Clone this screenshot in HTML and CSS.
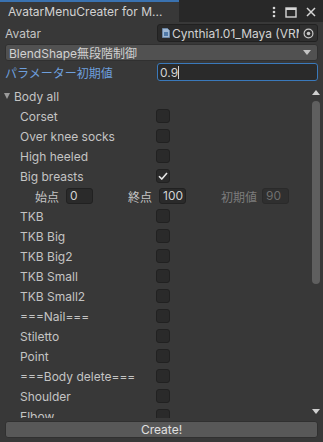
FILE: index.html
```html
<!doctype html>
<html>
<head>
<meta charset="utf-8">
<title>AvatarMenuCreater</title>
<link rel="stylesheet" href="styles.css">
</head>
<body>
<div class="window">
  <div class="tabbar">
    <div class="tab">AvatarMenuCreater for M...</div>
    <div class="tab-icons">
      <svg width="4" height="12" viewBox="0 0 4 12"><circle cx="2" cy="2" r="1.3" fill="#d6d6d6"/><circle cx="2" cy="6" r="1.3" fill="#d6d6d6"/><circle cx="2" cy="10" r="1.3" fill="#d6d6d6"/></svg>
      <svg width="12" height="11" viewBox="0 0 12 11"><rect x="1" y="1" width="10" height="9" fill="none" stroke="#d6d6d6" stroke-width="1.4"/><rect x="1" y="1" width="10" height="2" fill="#d6d6d6"/></svg>
      <svg width="10" height="10" viewBox="0 0 10 10"><path d="M1 1 L9 9 M9 1 L1 9" stroke="#d6d6d6" stroke-width="1.5"/></svg>
    </div>
  </div>

  <div class="row top-row">
    <div class="label">Avatar</div>
    <div class="object-field">
      <svg class="obj-icon" width="8" height="10" viewBox="0 0 8 10"><path d="M0.5 0.5 H5.5 L7.5 2.5 V9.5 H0.5 Z" fill="#9fb8d4" stroke="#6b86a6"/><rect x="2" y="4" width="4" height="4" fill="#4f79a8"/></svg>
      <span class="obj-text">Cynthia1.01_Maya (VRM)</span>
      <span class="obj-pick">
        <svg width="11" height="11" viewBox="0 0 11 11"><circle cx="5.5" cy="5.5" r="4.4" fill="none" stroke="#c8c8c8" stroke-width="1.2"/><circle cx="5.5" cy="5.5" r="1.8" fill="#c8c8c8"/></svg>
      </span>
    </div>
  </div>

  <div class="dropdown">
    <span>BlendShape無段階制御</span>
    <svg width="8" height="5" viewBox="0 0 8 5"><path d="M0 0 H8 L4 5 Z" fill="#c4c4c4"/></svg>
  </div>

  <div class="row top-row param-row">
    <div class="label focus">パラメーター初期値</div>
    <div class="text-field focused">0.9<span class="caret"></span></div>
  </div>

  <div class="scroll">
    <div class="list">
      <div class="foldout"><span class="fold-arrow"></span>Body all</div>
      <div class="item"><span class="label">Corset</span><span class="check"></span></div>
      <div class="item"><span class="label">Over knee socks</span><span class="check"></span></div>
      <div class="item"><span class="label">High heeled</span><span class="check"></span></div>
      <div class="item"><span class="label">Big breasts</span><span class="check on"><svg width="10" height="8" viewBox="0 0 10 8"><path d="M1 4.2 L3.8 7 L9 1" fill="none" stroke="#e6e6e6" stroke-width="1.6"/></svg></span></div>
      <div class="range">
        <span class="range-label">始点</span><span class="small-field">0</span>
        <span class="range-label">終点</span><span class="small-field">100</span>
        <span class="range-label dim">初期値</span><span class="small-field disabled">90</span>
      </div>
      <div class="item"><span class="label">TKB</span><span class="check"></span></div>
      <div class="item"><span class="label">TKB Big</span><span class="check"></span></div>
      <div class="item"><span class="label">TKB Big2</span><span class="check"></span></div>
      <div class="item"><span class="label">TKB Small</span><span class="check"></span></div>
      <div class="item"><span class="label">TKB Small2</span><span class="check"></span></div>
      <div class="item"><span class="label">===Nail===</span><span class="check"></span></div>
      <div class="item"><span class="label">Stiletto</span><span class="check"></span></div>
      <div class="item"><span class="label">Point</span><span class="check"></span></div>
      <div class="item"><span class="label">===Body delete===</span><span class="check"></span></div>
      <div class="item"><span class="label">Shoulder</span><span class="check"></span></div>
      <div class="item"><span class="label">Elbow</span><span class="check"></span></div>
    </div>
    <div class="scrollbar">
      <svg class="sb-arrow" width="8" height="5" viewBox="0 0 8 5"><path d="M0 5 H8 L4 0 Z" fill="#d0d0d0"/></svg>
      <div class="sb-track"><div class="sb-thumb"></div></div>
      <svg class="sb-arrow" width="8" height="5" viewBox="0 0 8 5"><path d="M0 0 H8 L4 5 Z" fill="#d0d0d0"/></svg>
    </div>
  </div>

  <div class="button">Create!</div>
</div>
</body>
</html>
```

FILE: styles.css
```css
body {
  margin: 0;
  background: #383838;
  font-family: Inter, "Noto Sans CJK JP", sans-serif;
  font-size: 12px;
  color: #c4c4c4;
  overflow: hidden;
}
.window {
  width: 323px;
  height: 442px;
  display: flex;
  flex-direction: column;
  background: #383838;
}
.tabbar {
  height: 22px;
  background: #282828;
  display: flex;
  align-items: stretch;
  justify-content: space-between;
  flex-shrink: 0;
}
.tab {
  width: 171px;
  background: #383838;
  border-top: 2px solid #3a72b0;
  padding-left: 8px;
  line-height: 20px;
  color: #d2d2d2;
  font-size: 12px;
  white-space: nowrap;
}
.tab-icons {
  display: flex;
  align-items: center;
  gap: 9px;
  padding-right: 7px;
  padding-top: 2px;
}
.row {
  display: flex;
  align-items: center;
}
.top-row {
  height: 18px;
  margin: 2px 5px 0;
}
.top-row .label {
  width: 152px;
  flex-shrink: 0;
  white-space: nowrap;
}
.label.focus {
  color: #6e9fdc;
}
.object-field {
  flex: 1;
  height: 18px;
  box-sizing: border-box;
  background: #2a2a2a;
  border: 1px solid #212121;
  border-radius: 3px;
  display: flex;
  align-items: center;
  overflow: hidden;
}
.obj-icon {
  margin: 0 2px 0 4px;
  flex-shrink: 0;
}
.obj-text {
  flex: 1;
  white-space: nowrap;
  overflow: hidden;
  color: #d2d2d2;
}
.obj-pick {
  width: 17px;
  height: 16px;
  display: flex;
  align-items: center;
  justify-content: center;
  background: #303030;
  border-left: 1px solid #262626;
  flex-shrink: 0;
}
.dropdown {
  height: 17px;
  box-sizing: border-box;
  margin: 2px 5px 0;
  background: #515151;
  border: 1px solid #303030;
  border-radius: 3px;
  display: flex;
  align-items: center;
  justify-content: space-between;
  padding: 0 6px 0 3px;
  color: #d2d2d2;
}
.text-field {
  flex: 1;
  height: 18px;
  box-sizing: border-box;
  background: #2a2a2a;
  border: 1px solid #212121;
  border-radius: 3px;
  padding-left: 2px;
  display: flex;
  align-items: center;
  color: #d2d2d2;
}
.text-field.focused {
  border-color: #3a79bb;
}
.caret {
  width: 1px;
  height: 13px;
  background: #d2d2d2;
}
.scroll {
  height: 332px;
  margin-top: 5px;
  display: flex;
  overflow: hidden;
  flex-shrink: 0;
}
.list {
  flex: 1;
}
.foldout, .item, .range {
  height: 20px;
  display: flex;
  align-items: center;
  white-space: nowrap;
}
.foldout {
  padding-left: 4px;
  color: #c4c4c4;
}
.fold-arrow {
  width: 0;
  height: 0;
  border-left: 3.5px solid transparent;
  border-right: 3.5px solid transparent;
  border-top: 6px solid #9a9a9a;
  margin-right: 4px;
}
.item {
  padding-left: 20px;
}
.item .label {
  width: 136px;
}
.check {
  width: 14px;
  height: 14px;
  box-sizing: border-box;
  background: #2a2a2a;
  border: 1px solid #212121;
  border-radius: 3px;
  display: flex;
  align-items: center;
  justify-content: center;
}
.range {
  padding-left: 35px;
}
.range-label {
  width: 31px;
  flex-shrink: 0;
}
.range-label.dim {
  width: 41px;
  color: #7c7c7c;
}
.small-field {
  width: 27px;
  height: 16px;
  box-sizing: border-box;
  background: #2a2a2a;
  border: 1px solid #212121;
  border-radius: 3px;
  padding-left: 3px;
  margin-right: 35px;
  line-height: 14px;
  color: #d2d2d2;
}
.small-field.disabled {
  background: #2f2f2f;
  border-color: #2a2a2a;
  color: #6e6e6e;
  margin-right: 0;
}
.scrollbar {
  width: 10px;
  margin-right: 2px;
  display: flex;
  flex-direction: column;
  align-items: center;
}
.sb-arrow {
  margin: 4px 0;
  flex-shrink: 0;
}
.sb-track {
  flex: 1;
  width: 10px;
}
.sb-thumb {
  margin: 2px 1px 0;
  height: 183px;
  background: #5f5f5f;
  border-radius: 4px;
}
.button {
  height: 17px;
  box-sizing: border-box;
  margin: 3px 5px 0;
  background: #585858;
  border: 1px solid #303030;
  border-radius: 3px;
  text-align: center;
  line-height: 15px;
  color: #e0e0e0;
}
```
